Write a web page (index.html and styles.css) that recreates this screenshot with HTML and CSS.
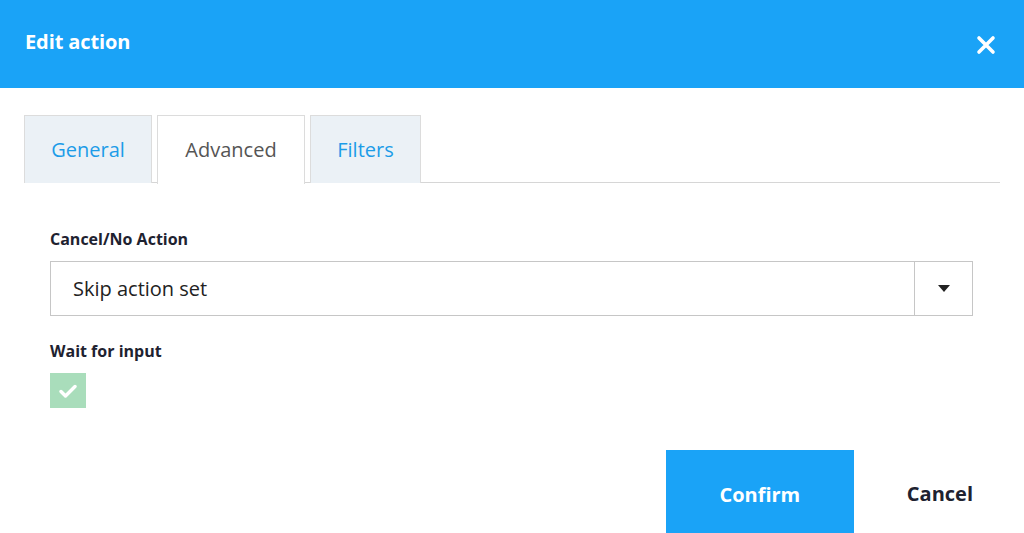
FILE: index.html
```html
<!DOCTYPE html>
<html>
<head>
<meta charset="utf-8">
<link rel="stylesheet" href="styles.css">
</head>
<body>
<div class="dialog">
  <header class="header">
    <h1 class="title">Edit action</h1>
    <button class="close" aria-label="Close">
      <svg width="20" height="20" viewBox="0 0 20 20"><path d="M3 3 L17 17 M17 3 L3 17" stroke="#fff" stroke-width="3.6" stroke-linecap="round"/></svg>
    </button>
  </header>
  <div class="body">
    <nav class="tabs">
      <div class="tab tab-general">General</div>
      <div class="tab tab-advanced active">Advanced</div>
      <div class="tab tab-filters">Filters</div>
    </nav>
    <div class="form">
      <label class="label">Cancel/No Action</label>
      <div class="select">
        <div class="select-value">Skip action set</div>
        <div class="select-arrow">
          <svg width="12" height="7" viewBox="0 0 12 7"><path d="M0 0 H12 L6 7 Z" fill="#222"/></svg>
        </div>
      </div>
      <label class="label label-wait">Wait for input</label>
      <div class="checkbox">
        <svg width="18" height="14" viewBox="0 0 18 14"><path d="M2 7.5 L6.5 12 L16 2.5" fill="none" stroke="#fff" stroke-width="3.4" stroke-linecap="round" stroke-linejoin="round"/></svg>
      </div>
    </div>
    <div class="actions">
      <button class="btn btn-confirm">Confirm</button>
      <button class="btn btn-cancel">Cancel</button>
    </div>
  </div>
</div>
</body>
</html>
```

FILE: styles.css
```css
* { box-sizing: border-box; }
html, body {
  margin: 0;
  padding: 0;
  background: #fff;
  overflow: hidden;
}
body {
  font-family: "Open Sans", "Noto Sans", sans-serif;
  color: #222;
}
.dialog {
  width: 1024px;
  height: 533px;
}
.header {
  height: 88px;
  background: #1aa3f7;
  display: flex;
  align-items: center;
  justify-content: space-between;
  padding: 0 28px 0 25px;
}
.title {
  margin: 0;
  color: #fff;
  font-size: 20px;
  font-weight: 700;
  letter-spacing: -0.1px;
  position: relative;
  top: -3px;
}
.close {
  background: none;
  border: none;
  padding: 0;
  width: 20px;
  height: 20px;
  display: flex;
  cursor: pointer;
  position: relative;
  top: 1px;
}
.body {
  padding: 27px 24px 0 24px;
}
.tabs {
  display: flex;
  gap: 5px;
  height: 68px;
  border-bottom: 1px solid #d6d6d6;
}
.tab {
  height: 68px;
  display: flex;
  align-items: center;
  justify-content: center;
  font-size: 20px;
  color: #1c9ce8;
  background: #ebf1f6;
  border: 1px solid #dcdcdc;
  border-bottom: none;
  padding-bottom: 0;
}
.tab-general { width: 128px; }
.tab-advanced { width: 148px; }
.tab-filters { width: 111px; }
.tab.active {
  background: #fff;
  color: #555;
  height: 69px;
  padding-bottom: 1px;
}
.form {
  padding: 45px 27px 0 26px;
  display: flex;
  flex-direction: column;
}
.label {
  font-size: 16px;
  font-weight: 700;
  color: #1e2230;
  line-height: 22px;
}
.select {
  margin-top: 11px;
  height: 55px;
  border: 1px solid #c6c6c6;
  display: flex;
}
.select-value {
  flex: 1;
  display: flex;
  align-items: center;
  padding-left: 22px;
  font-size: 20px;
  color: #222;
}
.select-arrow {
  width: 58px;
  border-left: 1px solid #c6c6c6;
  display: flex;
  align-items: center;
  justify-content: center;
  padding-bottom: 1px;
}
.label-wait {
  margin-top: 24px;
}
.checkbox {
  margin-top: 11px;
  width: 36px;
  height: 35px;
  background: #a9ddbb;
  display: flex;
  align-items: center;
  justify-content: center;
}
.actions {
  display: flex;
  justify-content: flex-end;
  margin-top: 42px;
  padding-right: 27px;
}
.btn {
  border: none;
  font-family: inherit;
  font-size: 20px;
  font-weight: 700;
  cursor: pointer;
}
.btn-confirm {
  width: 188px;
  height: 90px;
  background: #1aa3f7;
  color: #fff;
  padding: 0;
  align-self: flex-start;
  line-height: 88px;
}
.btn-cancel {
  background: none;
  color: #1e2230;
  margin-left: 53px;
  padding: 0;
  height: 88px;
  line-height: 88px;
  align-self: flex-start;
}
```
